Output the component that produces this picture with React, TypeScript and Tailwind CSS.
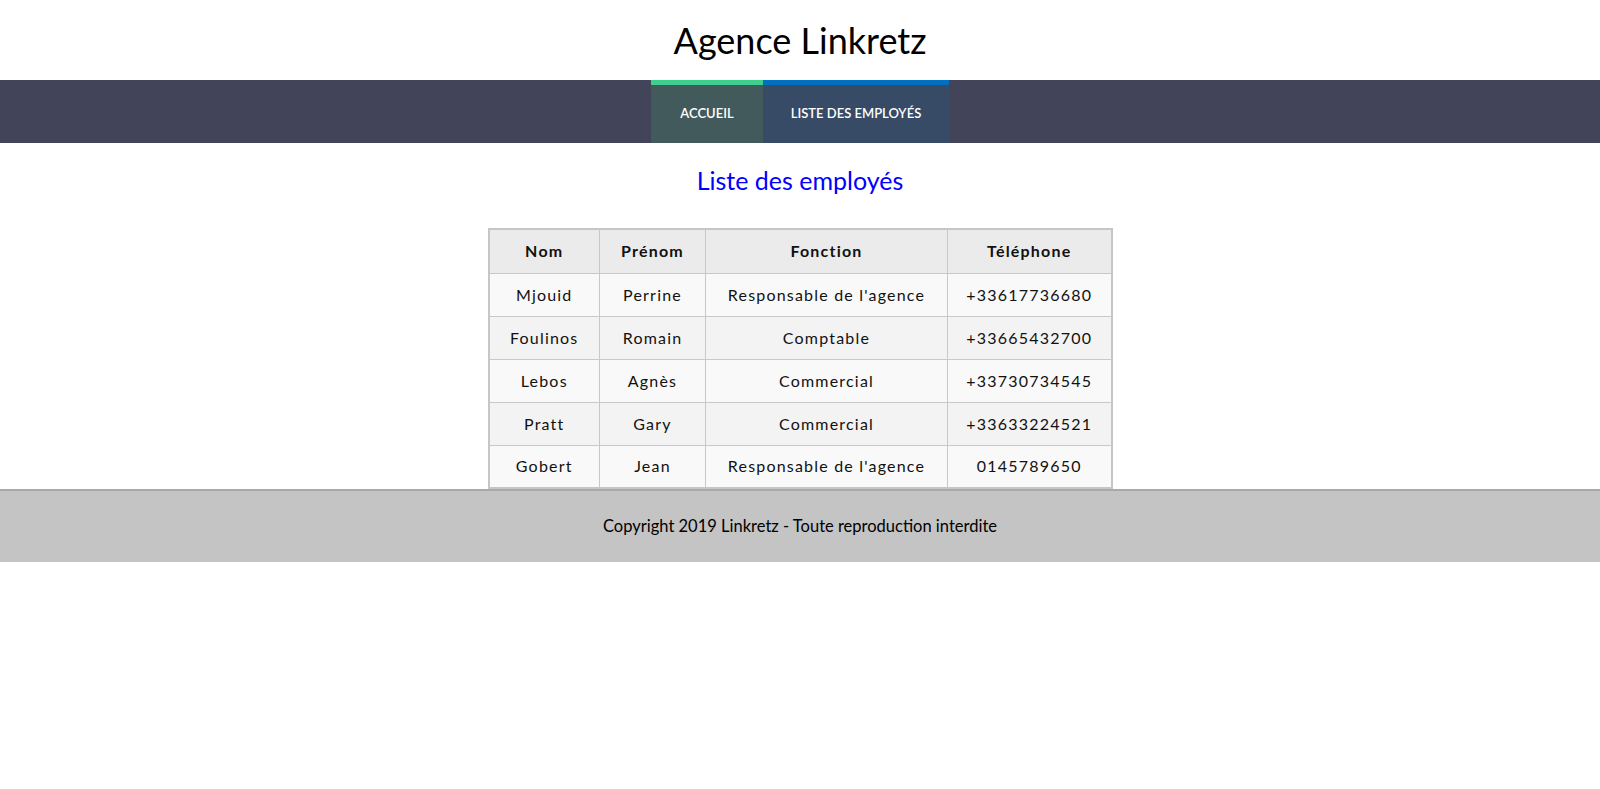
import React from 'react';

const employees = [
  { nom: 'Mjouid', prenom: 'Perrine', fonction: "Responsable de l'agence", tel: '+33617736680' },
  { nom: 'Foulinos', prenom: 'Romain', fonction: 'Comptable', tel: '+33665432700' },
  { nom: 'Lebos', prenom: 'Agnès', fonction: 'Commercial', tel: '+33730734545' },
  { nom: 'Pratt', prenom: 'Gary', fonction: 'Commercial', tel: '+33633224521' },
  { nom: 'Gobert', prenom: 'Jean', fonction: "Responsable de l'agence", tel: '0145789650' },
];

const font = { fontFamily: 'Lato, "Open Sans", sans-serif' };

export default function App() {
  return (
    <div className="min-h-screen bg-white text-black" style={font}>
      {/* Header */}
      <header className="h-[80px] flex items-center justify-center">
        <h1 className="text-[36px] leading-none">Agence Linkretz</h1>
      </header>

      {/* Navigation */}
      <nav className="h-[63px] bg-[#424559] flex justify-center">
        <a className="w-[112px] border-t-[5px] border-[#3ecf8e] bg-[#435a5c] flex items-center justify-center text-white text-[13px] font-semibold uppercase">
          Accueil
        </a>
        <a className="w-[186px] border-t-[5px] border-[#0070c0] bg-[#374a66] flex items-center justify-center text-white text-[13px] font-semibold uppercase">
          Liste des employés
        </a>
      </nav>

      {/* Main content */}
      <main className="flex flex-col items-center">
        <h2 className="pt-[21px] mb-[32px] text-[25px] leading-[32px] text-[#0000ff]">Liste des employés</h2>

        <table className="w-[623px] table-fixed border-collapse border-2 border-[#c6c6c6] text-[16px] tracking-[1.2px] text-[#111]">
          <thead>
            <tr className="h-[44px] bg-[#ebebeb]">
              <th className="w-[111px] border border-[#c8c8c8] font-bold">Nom</th>
              <th className="w-[106px] border border-[#c8c8c8] font-bold">Prénom</th>
              <th className="w-[242px] border border-[#c8c8c8] font-bold">Fonction</th>
              <th className="w-[164px] border border-[#c8c8c8] font-bold">Téléphone</th>
            </tr>
          </thead>
          <tbody>
            {employees.map((e, i) => (
              <tr key={e.nom} className={`h-[43px] ${i % 2 === 0 ? 'bg-[#f9f9f9]' : 'bg-[#f3f3f3]'}`}>
                <td className="border border-[#c8c8c8] text-center whitespace-nowrap">{e.nom}</td>
                <td className="border border-[#c8c8c8] text-center whitespace-nowrap">{e.prenom}</td>
                <td className="border border-[#c8c8c8] text-center whitespace-nowrap">{e.fonction}</td>
                <td className="border border-[#c8c8c8] text-center whitespace-nowrap">{e.tel}</td>
              </tr>
            ))}
          </tbody>
        </table>
      </main>

      {/* Footer */}
      <footer className="h-[73px] border-t-2 border-[#a9a9a9] bg-[#c4c4c4] flex items-center justify-center text-[16.5px]">
        Copyright 2019 Linkretz - Toute reproduction interdite
      </footer>
    </div>
  );
}
